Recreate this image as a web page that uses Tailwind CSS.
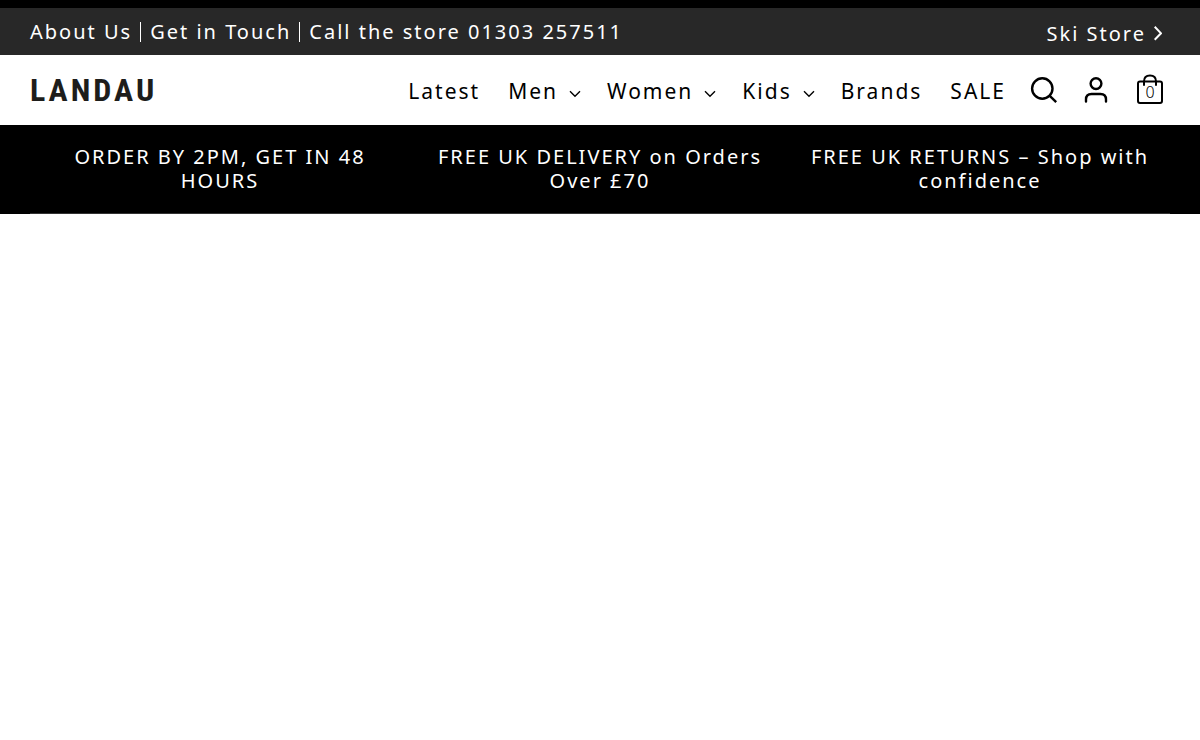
<!DOCTYPE html>
<html lang="en">

<head>
    <meta charset="UTF-8">
    <meta name="viewport" content="width=device-width, initial-scale=1.0">
    <title>Landau</title>
    <script src="https://cdn.jsdelivr.net/npm/@tailwindcss/browser@4"></script>
</head>

<body class="bg-white text-black font-['Noto_Sans',sans-serif]">

    <!-- Top bar -->
    <div class="bg-[#282828] border-t-8 border-black text-white text-xl tracking-[2px] px-[30px] h-[55px] flex items-center justify-between">
        <div class="flex items-center leading-5">
            <a href="#" class="pr-2">About Us</a>
            <a href="#" class="border-l border-white pl-[9px] pr-2">Get in Touch</a>
            <a href="#" class="border-l border-white pl-[9px]">Call the store 01303 257511</a>
        </div>
        <a href="#" class="flex items-center gap-2 pt-1 pr-2">
            Ski Store
            <svg class="w-2 h-4" viewBox="0 0 8 16" fill="none" stroke="currentColor" stroke-width="2"><path d="M0.7 0.8 7 7.3 0.7 13.8" /></svg>
        </a>
    </div>

    <!-- Header -->
    <header class="h-[70px] px-[30px] flex items-center justify-between">
        <a href="#" class="font-['Roboto_Condensed','Liberation_Sans_Narrow',sans-serif] font-bold text-[32px] leading-9 tracking-[3px] text-[#1d1d1b]">LANDAU</a>

        <div class="flex items-center gap-6">
            <nav class="flex items-center text-[21px] tracking-[2px] gap-7 pt-1">
                <a href="#">Latest</a>
                <div class="flex gap-[26px]">
                    <a href="#" class="flex items-center gap-[11px]">Men
                        <svg class="w-3 h-2 mt-1" viewBox="0 0 12 8" fill="none" stroke="currentColor" stroke-width="1.4"><path d="M1 1.2 6 6.2 11 1.2" /></svg>
                    </a>
                    <a href="#" class="flex items-center gap-[11px]">Women
                        <svg class="w-3 h-2 mt-1" viewBox="0 0 12 8" fill="none" stroke="currentColor" stroke-width="1.4"><path d="M1 1.2 6 6.2 11 1.2" /></svg>
                    </a>
                    <a href="#" class="flex items-center gap-[11px]">Kids
                        <svg class="w-3 h-2 mt-1" viewBox="0 0 12 8" fill="none" stroke="currentColor" stroke-width="1.4"><path d="M1 1.2 6 6.2 11 1.2" /></svg>
                    </a>
                    <a href="#">Brands</a>
                </div>
                <a href="#">SALE</a>
            </nav>

            <div class="flex items-center gap-[26px] pr-[6px]">
                <div class="flex items-center gap-6">
                    <button type="button" aria-label="Search">
                        <svg class="w-7 h-8" viewBox="0 0 28 32" fill="none" stroke="currentColor" stroke-width="2.4"><circle cx="12.3" cy="14.5" r="10.2" /><path d="M19.5 21.7 26.2 28.2" /></svg>
                    </button>
                    <a href="#" aria-label="Account">
                        <svg class="w-7 h-8" viewBox="0 0 28 32" fill="none" stroke="currentColor" stroke-width="2.4" stroke-linecap="round"><circle cx="14" cy="9.6" r="5.4" /><path d="M4 27.5V25.5Q4 20 9.5 20H18.5Q24 20 24 25.5V27.5" /></svg>
                    </a>
                </div>
                <a href="#" aria-label="Basket" class="relative">
                    <svg class="w-7 h-8" viewBox="0 0 28 32" fill="none" stroke="currentColor" stroke-width="2" stroke-linecap="round"><rect x="2" y="7.5" width="24" height="21.5" rx="2" /><path d="M8 11V7.5Q8 1.5 14 1.5T20 7.5V11" /></svg>
                    <span class="absolute inset-x-0 top-2 text-center text-base font-light leading-5">0</span>
                </a>
            </div>
        </div>
    </header>

    <!-- Selling points -->
    <section class="bg-black px-[30px]">
        <ul class="grid grid-cols-3 text-center text-white text-xl leading-6 tracking-[2px] pt-5 pb-5 border-b border-[#333]">
            <li class="px-5">ORDER BY 2PM, GET IN 48 HOURS</li>
            <li class="px-5">FREE UK DELIVERY on Orders Over £70</li>
            <li class="px-5">FREE UK RETURNS – Shop with confidence</li>
        </ul>
    </section>

</body>

</html>
